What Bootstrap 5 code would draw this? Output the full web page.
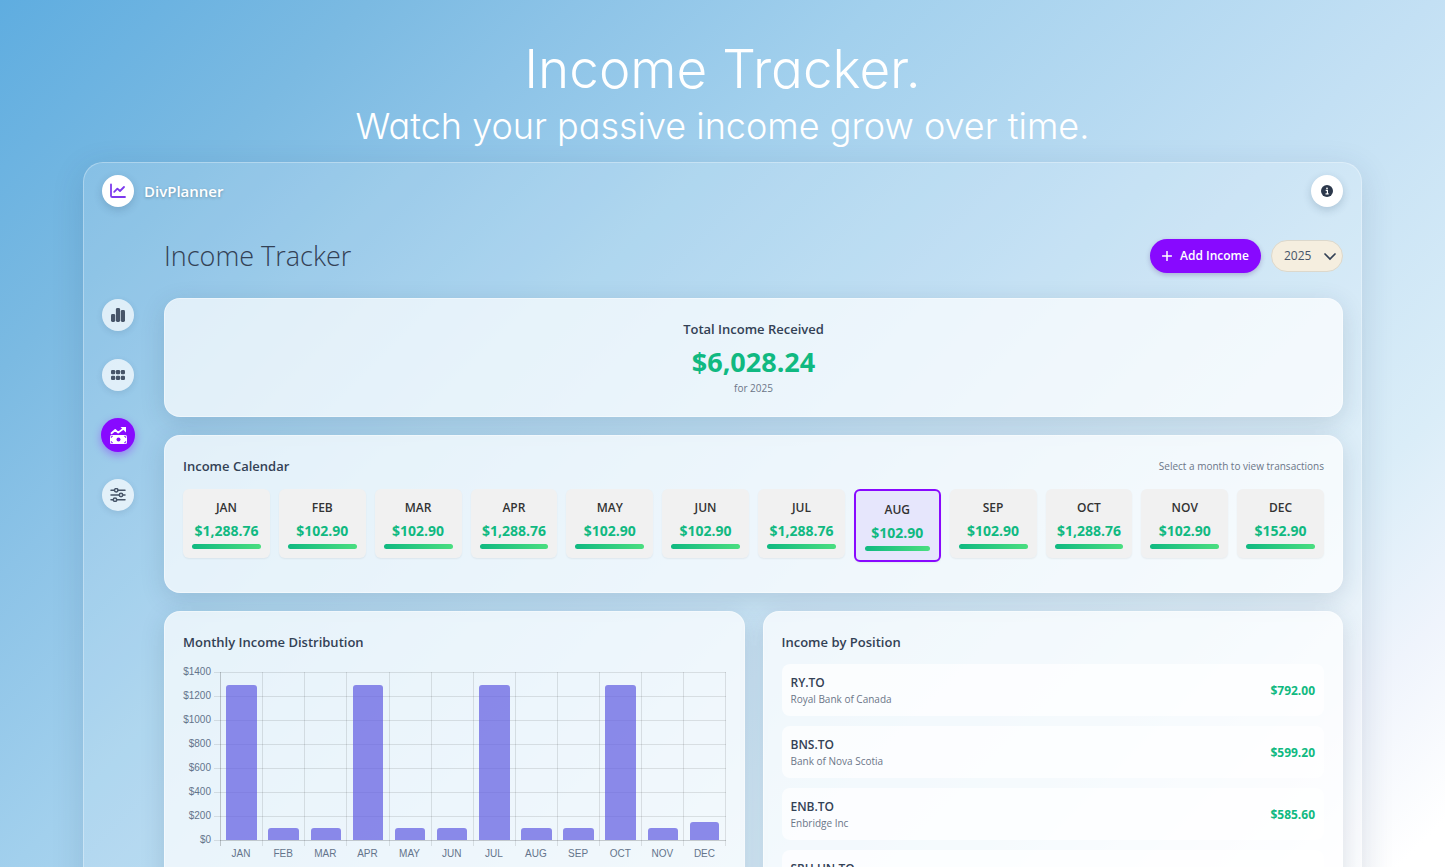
<!DOCTYPE html>
<html lang="en">
<head>
<meta charset="utf-8">
<meta name="viewport" content="width=device-width, initial-scale=1">
<title>DivPlanner – Income Tracker</title>
<link href="https://cdn.jsdelivr.net/npm/bootstrap@5.3.0/dist/css/bootstrap.min.css" rel="stylesheet">
<style>
  :root { --ink: #334155; --muted-ink: #6b7688; --gain: #10b981; --brand: #8809ff; }
  body {
    font-family: "Open Sans", "Noto Sans", sans-serif; font-size: 13px; line-height: 18px; color: var(--ink);
    background: linear-gradient(135deg, #5fade0 0%, #7bbae2 16%, #8cc3e7 25%, #a2d0ed 38%, #c3e0f4 62%, #daedf8 80%, #eff4fc 89%, #fff 98%) no-repeat;
  }
  .hero { padding-top: 40px; font-family: Inter, "Open Sans", sans-serif; font-feature-settings: "cv11"; font-weight: 300; color: #fff; }
  .hero h1 { font-size: 53px; line-height: 58px; font-weight: 300; }
  .hero p { font-size: 36px; line-height: 48px; padding-top: 4px; }
  .shell {
    margin: 12px 83px 0; padding: 12px 18px 0; border: 1px solid rgba(255,255,255,.3); border-radius: 20px;
    background: rgba(255,255,255,.15); box-shadow: 0 8px 32px rgba(31,60,100,.15);
  }
  .round { width: 32px; height: 32px; flex: none; display: flex; align-items: center; justify-content: center; border: 0; padding: 0; border-radius: 50%; background: #fff; color: var(--ink); box-shadow: 0 3px 9px rgba(30,60,90,.2); }
  .tight { gap: 10px; }
  .brand-name { font-size: 15px; font-weight: 600; color: #fff; text-shadow: 0 1px 3px rgba(0,0,0,.25); text-decoration: none; }
  .side { width: 62px; padding-top: 60px; gap: 28px; }
  .side .round { background: rgba(255,255,255,.7); color: #475569; box-shadow: 0 2px 6px rgba(30,60,90,.12); }
  .side .round.active { width: 34px; height: 34px; margin: -1px; background: var(--brand); color: #fff; box-shadow: 0 3px 9px rgba(136,9,255,.4); }
  .title-row { padding: 7px 0 6px; }
  .page-title { font-size: 27px; line-height: 36px; font-weight: 300; }
  .add-btn { height: 34px; border: 0; border-radius: 17px; padding: 0 12px; background: var(--brand); color: #fff; font-size: 12px; font-weight: 600; box-shadow: 0 2px 5px rgba(60,20,120,.25); }
  .year {
    width: 72px; height: 32px; border: 1px solid #dcd8cc; border-radius: 16px; padding: 0 12px; font-size: 12px; color: #475569; appearance: none;
    background: #f5eedf url("data:image/svg+xml,%3Csvg xmlns='http://www.w3.org/2000/svg' viewBox='0 0 12 12' fill='none' stroke='%23334155' stroke-width='1.700' stroke-linecap='round'%3E%3Cpath d='M1 4l5 5 5-5'/%3E%3C/svg%3E") no-repeat right 6px center / 12px;
  }
  .glass { border: 1px solid rgba(255,255,255,.4); border-radius: 16px; padding: 20px 18px; background: rgba(255,255,255,.7); box-shadow: 0 6px 24px rgba(31,60,90,.15); }
  .stack { gap: 18px; }
  .glass h2 { font-size: 13px; line-height: 20px; font-weight: 600; margin: 0; }
  .hint { font-size: 10px; line-height: 16px; color: var(--muted-ink); }
  .total { font-size: 27px; line-height: 36px; font-weight: 700; color: var(--gain); padding-top: 5px; }
  .months { display: grid; grid-template-columns: repeat(12, minmax(0, 1fr)); gap: 9px; align-items: start; padding: 13px 0 10px; }
  .month { border: 0; border-radius: 6px; padding: 10px 9px 9px; background: #f1f1f1; color: #333; font-size: 12px; font-weight: 600; text-align: center; box-shadow: 0 1px 2px rgba(0,0,0,.06); }
  .month b { display: block; margin: 5px 0 4px; font-size: 14px; font-weight: 700; color: var(--gain); }
  .month i { display: block; height: 5px; border-radius: 3px; background: linear-gradient(90deg, #10b981, #4ade80); }
  .month.active { border: 2px solid var(--brand); background: #e6e6fc; }
  .duo { display: grid; grid-template-columns: repeat(2, minmax(0, 1fr)); gap: 18px; }
  .chart { padding-top: 20px; font: 10px/12px "Liberation Sans", Arial, sans-serif; color: #64748b; }
  .y-axis { width: 28px; height: 180px; margin: -6px 3px 0 0; }
  .y-ticks { width: 6px; height: 169px; }
  .y-ticks, .plot { background: repeating-linear-gradient(rgba(0,0,0,.1) 0 1px, transparent 1px 24px); }
  .bars { display: grid; grid-template-columns: repeat(12, minmax(0, 1fr)); }
  .slot { text-align: center; }
  .plot { height: 168px; display: flex; align-items: flex-end; justify-content: center; box-shadow: 0 1px rgba(0,0,0,.18); }
  .plot, .tick { border-left: 1px solid rgba(0,0,0,.1); }
  .slot:first-child .plot, .slot:first-child .tick { border-left-color: rgba(0,0,0,.2); }
  .slot:last-child .plot, .slot:last-child .tick { border-right: 1px solid rgba(0,0,0,.1); }
  .plot span { width: 74%; border-radius: 3px 3px 0 0; background: rgba(99,94,226,.72); }
  .tick { height: 6px; margin-bottom: 2px; }
  .holdings { gap: 10px; padding-top: 12px; }
  .holding { height: 52px; border-radius: 8px; padding: 2px 9px 0; background: rgba(255,255,255,.7); }
  .holding strong { display: block; font-size: 12px; line-height: 17px; font-weight: 600; }
  .holding small { display: block; font-size: 10px; line-height: 17px; color: var(--muted-ink); }
  .holding b { font-size: 12px; font-weight: 700; color: var(--gain); }
</style>
</head>
<body>
<div class="vh-100 overflow-hidden">
  <header class="hero text-center">
    <h1 class="m-0">Income Tracker.</h1>
    <p class="m-0">Watch your passive income grow over time.</p>
  </header>

  <div class="shell">
    <nav class="d-flex align-items-center justify-content-between">
      <div class="d-flex align-items-center tight">
        <span class="round"><svg width="16" height="16" viewBox="0 0 16 16" fill="none" stroke="#7c3aed" stroke-width="1.8" stroke-linecap="round" stroke-linejoin="round"><path d="M1 1.5V12.7Q1 14 2.3 14H15M4.2 8.8L7.4 5.6L10 8L14 4"/></svg></span>
        <a class="brand-name" href="#">DivPlanner</a>
      </div>
      <button class="round" aria-label="Information"><svg width="12" height="12" viewBox="0 0 12 12"><circle cx="6" cy="6" r="6" fill="#2c384b"/><circle cx="6" cy="3.3" r=".9" fill="#fff"/><path d="M4.7 5.3H6.4V8.6M4.5 8.8H7.7" stroke="#fff" stroke-width="1.2" fill="none"/></svg></button>
    </nav>

    <div class="d-flex pt-4">
      <aside class="side d-flex flex-column flex-shrink-0 mt-2">
        <button class="round" aria-label="Dashboard"><svg width="14" height="14" viewBox="0 0 14 14" fill="currentColor"><rect y="6" width="4.200" height="8" rx="1.4"/><rect x="4.900" width="4.200" height="14" rx="1.4"/><rect x="9.800" y="2" width="4.200" height="12" rx="1.4"/></svg></button>
        <button class="round" aria-label="Portfolio"><svg width="14" height="10" viewBox="0 0 14 10" fill="currentColor"><rect width="4.200" height="4.200" rx="1.2"/><rect x="4.900" width="4.200" height="4.200" rx="1.2"/><rect x="9.800" width="4.200" height="4.200" rx="1.2"/><rect y="5.800" width="4.200" height="4.200" rx="1.2"/><rect x="4.900" y="5.800" width="4.200" height="4.200" rx="1.2"/><rect x="9.800" y="5.800" width="4.200" height="4.200" rx="1.2"/></svg></button>
        <button class="round active" aria-label="Income"><svg width="17" height="17" viewBox="0 0 17 17"><path d="M1.5 6.200L5.2 3L8.2 5.600L13 2" fill="none" stroke="#fff" stroke-width="1.800" stroke-linecap="round" stroke-linejoin="round"/><path d="M10.5 0H16V5.5Z" fill="#fff"/><rect y="8" width="17" height="9" rx="1.6" fill="#fff"/><circle cx="8.500" cy="12.500" r="2" fill="#8809ff"/><path d="M1.300 11V9.300H3M14 9.300H15.700V11M1.300 14V15.700H3M14 15.700H15.700V14" fill="none" stroke="#8809ff" stroke-width=".8"/></svg></button>
        <button class="round" aria-label="Settings"><svg width="16" height="14" viewBox="0 0 16 14" fill="none" stroke="currentColor" stroke-width="1.500" stroke-linecap="round"><path d="M1 2.200H4.300M8 2.200H15M1 7H9M12.800 7H15M1 11.800H3M7 11.800H15"/><circle cx="6.200" cy="2.200" r="1.700"/><circle cx="11" cy="7" r="1.700"/><circle cx="5" cy="11.800" r="1.700"/></svg></button>
      </aside>

      <main class="flex-grow-1 d-flex flex-column stack">
        <div class="title-row d-flex align-items-center justify-content-between">
          <h1 class="page-title m-0">Income Tracker</h1>
          <div class="d-flex align-items-center tight">
            <button class="add-btn d-flex align-items-center gap-2"><svg width="10" height="10" viewBox="0 0 10 10" stroke="#fff" stroke-width="1.500" stroke-linecap="round"><path d="M5 .5V9.500M.5 5H9.500"/></svg>Add Income</button>
            <select class="year" aria-label="Year"><option>2025</option></select>
          </div>
        </div>

        <section class="glass text-center">
          <h2>Total Income Received</h2>
          <div class="total">$6,028.24</div>
          <div class="hint">for 2025</div>
        </section>

        <section class="glass">
          <div class="d-flex justify-content-between align-items-center"><h2>Income Calendar</h2><span class="hint">Select a month to view transactions</span></div>
          <div class="months">
            <button class="month">JAN<b>$1,288.76</b><i></i></button>
            <button class="month">FEB<b>$102.90</b><i></i></button>
            <button class="month">MAR<b>$102.90</b><i></i></button>
            <button class="month">APR<b>$1,288.76</b><i></i></button>
            <button class="month">MAY<b>$102.90</b><i></i></button>
            <button class="month">JUN<b>$102.90</b><i></i></button>
            <button class="month">JUL<b>$1,288.76</b><i></i></button>
            <button class="month active">AUG<b>$102.90</b><i></i></button>
            <button class="month">SEP<b>$102.90</b><i></i></button>
            <button class="month">OCT<b>$1,288.76</b><i></i></button>
            <button class="month">NOV<b>$102.90</b><i></i></button>
            <button class="month">DEC<b>$152.90</b><i></i></button>
          </div>
        </section>

        <div class="duo">
          <section class="glass">
            <h2>Monthly Income Distribution</h2>
            <div class="chart d-flex">
              <div class="y-axis d-flex flex-column justify-content-between text-end"><span>$1400</span><span>$1200</span><span>$1000</span><span>$800</span><span>$600</span><span>$400</span><span>$200</span><span>$0</span></div>
              <div class="y-ticks"></div>
              <div class="bars flex-grow-1">
                <div class="slot"><div class="plot"><span style="height:92.1%"></span></div><div class="tick"></div>JAN</div>
                <div class="slot"><div class="plot"><span style="height:7.4%"></span></div><div class="tick"></div>FEB</div>
                <div class="slot"><div class="plot"><span style="height:7.4%"></span></div><div class="tick"></div>MAR</div>
                <div class="slot"><div class="plot"><span style="height:92.1%"></span></div><div class="tick"></div>APR</div>
                <div class="slot"><div class="plot"><span style="height:7.4%"></span></div><div class="tick"></div>MAY</div>
                <div class="slot"><div class="plot"><span style="height:7.4%"></span></div><div class="tick"></div>JUN</div>
                <div class="slot"><div class="plot"><span style="height:92.1%"></span></div><div class="tick"></div>JUL</div>
                <div class="slot"><div class="plot"><span style="height:7.4%"></span></div><div class="tick"></div>AUG</div>
                <div class="slot"><div class="plot"><span style="height:7.4%"></span></div><div class="tick"></div>SEP</div>
                <div class="slot"><div class="plot"><span style="height:92.1%"></span></div><div class="tick"></div>OCT</div>
                <div class="slot"><div class="plot"><span style="height:7.4%"></span></div><div class="tick"></div>NOV</div>
                <div class="slot"><div class="plot"><span style="height:10.9%"></span></div><div class="tick"></div>DEC</div>
              </div>
            </div>
          </section>

          <section class="glass">
            <h2>Income by Position</h2>
            <div class="holdings d-flex flex-column">
              <div class="holding d-flex align-items-center justify-content-between"><div><strong>RY.TO</strong><small>Royal Bank of Canada</small></div><b>$792.00</b></div>
              <div class="holding d-flex align-items-center justify-content-between"><div><strong>BNS.TO</strong><small>Bank of Nova Scotia</small></div><b>$599.20</b></div>
              <div class="holding d-flex align-items-center justify-content-between"><div><strong>ENB.TO</strong><small>Enbridge Inc</small></div><b>$585.60</b></div>
              <div class="holding d-flex align-items-center justify-content-between"><div><strong>SRU.UN.TO</strong><small>&nbsp;</small></div></div>
            </div>
          </section>
        </div>
      </main>
    </div>
  </div>
</div>
<script src="https://cdn.jsdelivr.net/npm/bootstrap@5.3.0/dist/js/bootstrap.bundle.min.js"></script>
</body>
</html>
